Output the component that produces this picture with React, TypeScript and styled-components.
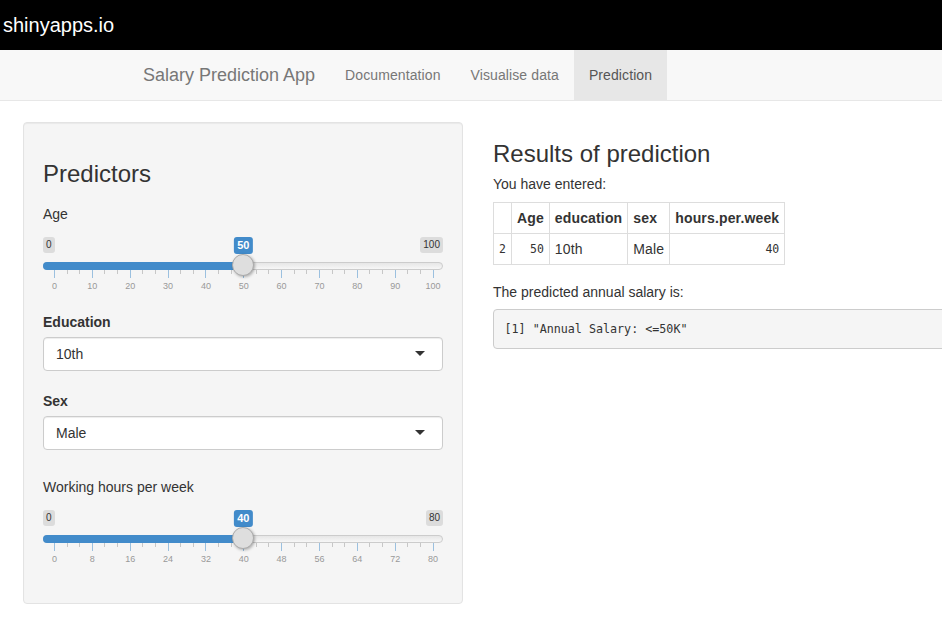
import React from "react";
import styled, { createGlobalStyle } from "styled-components";

const GlobalStyle = createGlobalStyle`
  html, body { margin: 0; padding: 0; }
  body {
    overflow: hidden;
    background: #fff;
    color: #333;
    font-family: "Liberation Sans", Arial, sans-serif;
    font-size: 14px;
    line-height: 1.42857;
  }
  * { box-sizing: border-box; }
`;

const TopBar = styled.header`
  height: 50px;
  background: #000;
  display: flex;
  align-items: center;
  padding-left: 3px;
  color: #fff;
  font-size: 20px;
  line-height: normal;
`;

const NavBar = styled.nav`
  height: 51px;
  background: #f8f8f8;
  border-bottom: 1px solid #e7e7e7;
  display: flex;
  padding-left: 128px;
`;

const Brand = styled.div`
  padding: 15px;
  font-size: 18px;
  line-height: 20px;
  height: 50px;
  color: #777;
`;

const NavLink = styled.div<{ $active?: boolean }>`
  padding: 15px;
  height: 50px;
  line-height: 20px;
  font-size: 14px;
  letter-spacing: 0.1px;
  color: ${(p) => (p.$active ? "#555" : "#777")};
  background: ${(p) => (p.$active ? "#e7e7e7" : "transparent")};
`;

const Main = styled.main`
  display: flex;
  align-items: flex-start;
  gap: 30px;
  padding: 21px 0 0 23px;
  width: 1500px;
`;

const Well = styled.section`
  flex: 0 0 440px;
  padding: 19px;
  background: #f5f5f5;
  border: 1px solid #e3e3e3;
  border-radius: 4px;
  box-shadow: inset 0 1px 1px rgba(0, 0, 0, 0.05);
`;

const Heading = styled.h3<{ $mb: number }>`
  margin: 19px 0 ${(p) => p.$mb}px;
  font-size: 24px;
  font-weight: 500;
  line-height: 1.1;
  color: #333;
`;

const FieldGroup = styled.div<{ $mb: number }>`
  margin-bottom: ${(p) => p.$mb}px;
`;

const Label = styled.label<{ $bold?: boolean }>`
  display: block;
  margin-bottom: 5px;
  line-height: 20px;
  font-weight: ${(p) => (p.$bold ? 700 : 400)};
`;

const Select = styled.div`
  position: relative;
  height: 34px;
  padding: 6px 12px;
  background: #fff;
  border: 1px solid #ccc;
  border-radius: 4px;
  box-shadow: inset 0 1px 1px rgba(0, 0, 0, 0.075);
  line-height: 20px;
  color: #333;
  &::after {
    content: "";
    position: absolute;
    right: 17px;
    top: 50%;
    margin-top: -3px;
    border-style: solid;
    border-width: 5px 5px 0 5px;
    border-color: #333 transparent transparent transparent;
  }
`;

/* ---------- slider ---------- */

const SliderBox = styled.div`
  position: relative;
  height: 68px;
`;

const EdgeLabel = styled.span<{ $side: "left" | "right" }>`
  position: absolute;
  top: 8px;
  ${(p) => (p.$side === "left" ? "left: 0;" : "right: 0;")}
  padding: 1px 3px;
  font-size: 10px;
  line-height: 1.333;
  color: #333;
  background: rgba(0, 0, 0, 0.1);
  border-radius: 3px;
`;

const ValueLabel = styled.span`
  position: absolute;
  top: 8px;
  transform: translateX(-50%);
  padding: 1px 3px;
  font-size: 11px;
  font-weight: 700;
  line-height: 1.333;
  color: #fff;
  background: #428bca;
  border-radius: 3px;
`;

const Line = styled.div`
  position: absolute;
  top: 33px;
  left: 0;
  right: 0;
  height: 8px;
  border: 1px solid #ccc;
  border-radius: 8px;
  background: linear-gradient(to bottom, #dedede -50%, #fff 150%);
`;

const Bar = styled.div`
  position: absolute;
  top: 33px;
  left: 0;
  height: 8px;
  background: #428bca;
  border-radius: 8px 0 0 8px;
`;

const Handle = styled.div`
  position: absolute;
  top: 25px;
  width: 22px;
  height: 22px;
  margin-left: -11px;
  border: 1px solid #ababab;
  border-radius: 50%;
  background: #dedede;
  box-shadow: 1px 1px 3px rgba(0, 0, 0, 0.3);
`;

const Tick = styled.span<{ $major: boolean }>`
  position: absolute;
  top: 41px;
  width: 1px;
  height: ${(p) => (p.$major ? 8 : 4)}px;
  background: ${(p) => (p.$major ? "#428bca" : "#999")};
  opacity: 0.5;
`;

const TickLabel = styled.span`
  position: absolute;
  top: 52px;
  transform: translateX(-50%);
  font-size: 9px;
  line-height: 11px;
  color: #999;
  white-space: nowrap;
`;

type SliderProps = { min: number; max: number; value: number };

const Slider: React.FC<SliderProps> = ({ min, max, value }) => {
  const pos = (v: number) => 11 + ((v - min) / (max - min)) * 378.5;
  const ticks = Array.from({ length: 31 }, (_, i) => i);
  const step = (max - min) / 10;
  return (
    <SliderBox>
      <EdgeLabel $side="left">{min}</EdgeLabel>
      <EdgeLabel $side="right">{max}</EdgeLabel>
      <ValueLabel style={{ left: pos(value) }}>{value}</ValueLabel>
      <Line />
      <Bar style={{ width: pos(value) }} />
      {ticks.map((i) => {
        const v = min + (i / 30) * (max - min);
        return <Tick key={i} $major={i % 3 === 0} style={{ left: Math.round(pos(v)) }} />;
      })}
      {Array.from({ length: 11 }, (_, i) => (
        <TickLabel key={i} style={{ left: pos(min + i * step) + 0.5 }}>
          {min + i * step}
        </TickLabel>
      ))}
      <Handle style={{ left: pos(value) }} />
    </SliderBox>
  );
};

/* ---------- results ---------- */

const Results = styled.section`
  flex: 0 0 940px;
`;

const Para = styled.div<{ $mb: number }>`
  line-height: 20px;
  margin-bottom: ${(p) => p.$mb}px;
`;

const Table = styled.table`
  border-collapse: collapse;
  margin-bottom: 17px;
`;

const Cell = styled.td<{ $num?: boolean; $head?: boolean; $mono?: boolean }>`
  border: 1px solid #ddd;
  padding: 5px;
  line-height: 20px;
  letter-spacing: ${(p) => (p.$mono ? "0" : "0.15px")};
  text-align: ${(p) => (p.$num ? "right" : "left")};
  font-weight: ${(p) => (p.$head ? 700 : 400)};
  font-family: ${(p) =>
    p.$mono ? '"DejaVu Sans Mono", "Liberation Mono", monospace' : "inherit"};
  font-size: ${(p) => (p.$mono ? "11.5px" : "14px")};
`;

const Pre = styled.pre`
  margin: 0;
  padding: 9.5px 9.5px 9.5px 10.5px;
  background: #f5f5f5;
  border: 1px solid #ccc;
  border-radius: 4px;
  font-family: "DejaVu Sans Mono", "Liberation Mono", monospace;
  font-size: 11.7px;
  line-height: 18.5px;
  color: #333;
`;

export default function App() {
  return (
    <>
      <GlobalStyle />
      <TopBar>shinyapps.io</TopBar>
      <NavBar>
        <Brand>Salary Prediction App</Brand>
        <NavLink>Documentation</NavLink>
        <NavLink>Visualise data</NavLink>
        <NavLink $active>Prediction</NavLink>
      </NavBar>
      <Main>
        <Well>
          <Heading $mb={17}>Predictors</Heading>
          <FieldGroup $mb={15}>
            <Label>Age</Label>
            <Slider min={0} max={100} value={50} />
          </FieldGroup>
          <FieldGroup $mb={20}>
            <Label $bold>Education</Label>
            <Select>10th</Select>
          </FieldGroup>
          <FieldGroup $mb={27}>
            <Label $bold>Sex</Label>
            <Select>Male</Select>
          </FieldGroup>
          <FieldGroup $mb={14}>
            <Label>Working hours per week</Label>
            <Slider min={0} max={80} value={40} />
          </FieldGroup>
        </Well>
        <Results>
          <Heading $mb={7}>Results of prediction</Heading>
          <Para $mb={8}>You have entered:</Para>
          <Table>
            <thead>
              <tr>
                <Cell as="th" $head></Cell>
                <Cell as="th" $head $num>Age</Cell>
                <Cell as="th" $head>education</Cell>
                <Cell as="th" $head>sex</Cell>
                <Cell as="th" $head $num>hours.per.week</Cell>
              </tr>
            </thead>
            <tbody>
              <tr>
                <Cell $mono>2</Cell>
                <Cell $num $mono>50</Cell>
                <Cell>10th</Cell>
                <Cell>Male</Cell>
                <Cell $num $mono>40</Cell>
              </tr>
            </tbody>
          </Table>
          <Para $mb={7}>The predicted annual salary is:</Para>
          <Pre>[1] "Annual Salary: &lt;=50K"</Pre>
        </Results>
      </Main>
    </>
  );
}
